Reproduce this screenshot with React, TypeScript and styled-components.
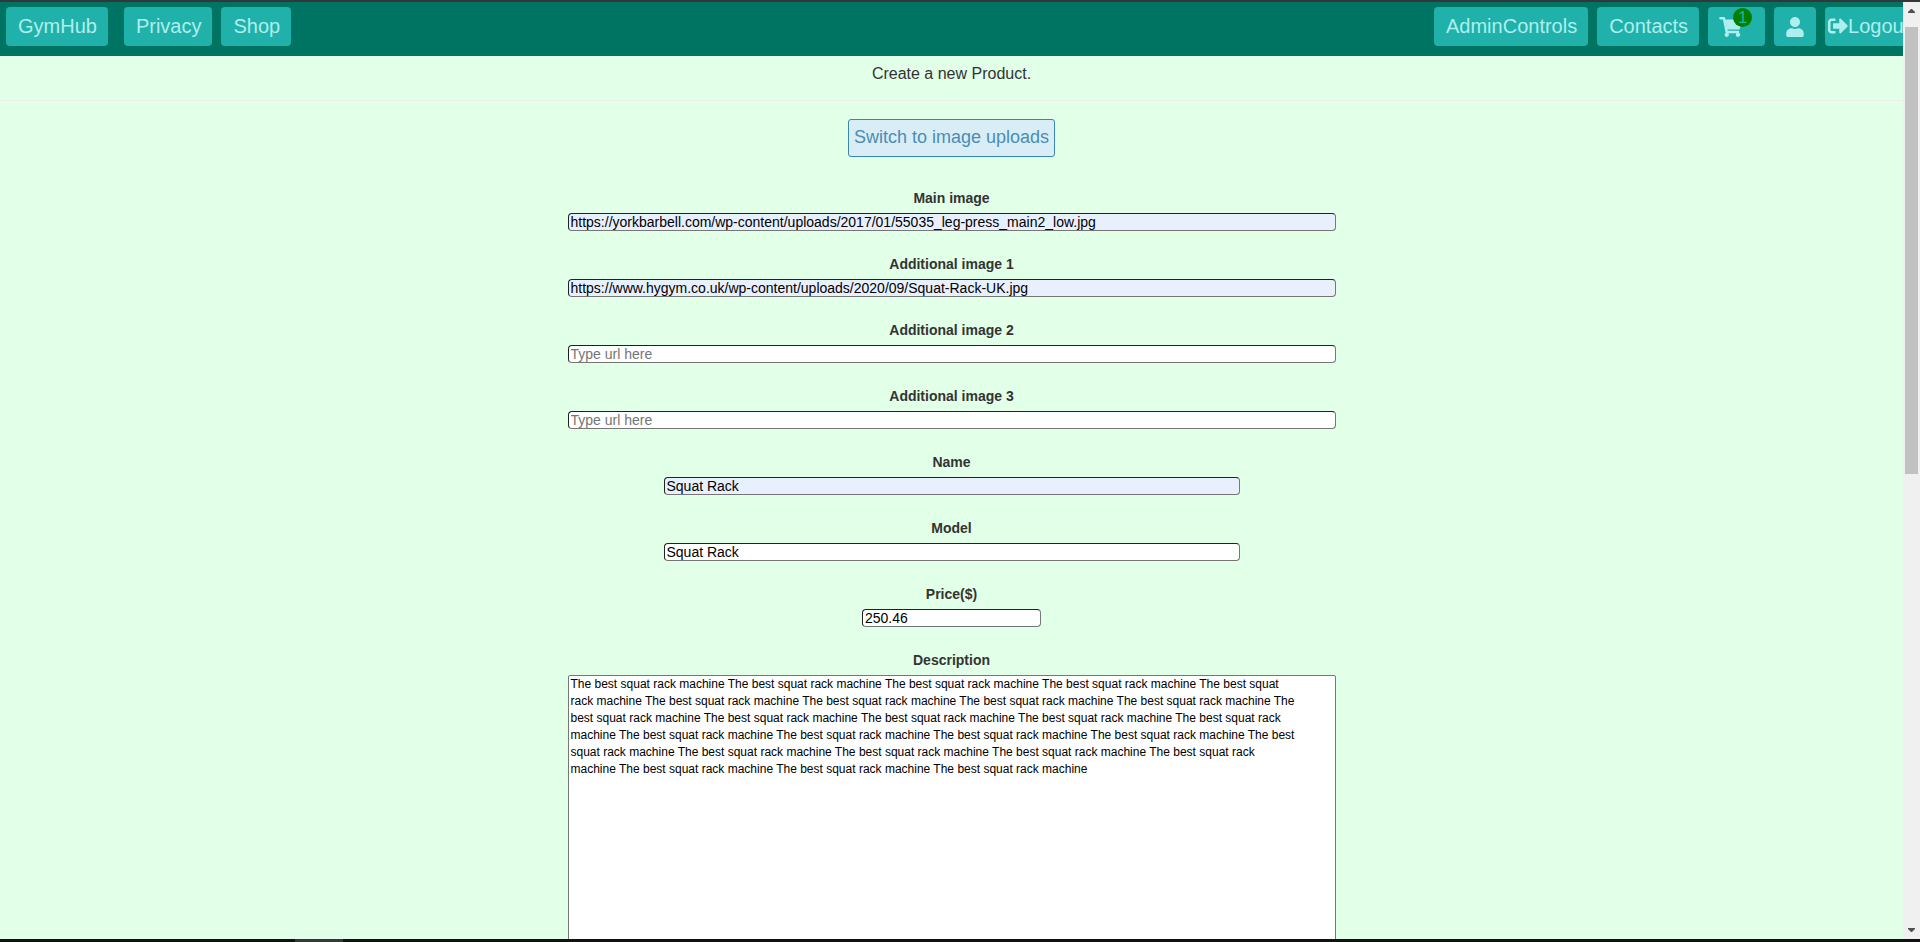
import React from "react";
import styled, { createGlobalStyle } from "styled-components";
import { FaShoppingCart, FaSignOutAlt, FaUser } from "react-icons/fa";

const GlobalStyle = createGlobalStyle`
  *, *::before, *::after { box-sizing: border-box; }
  body {
    margin: 0;
    font-family: "Liberation Sans", Arial, sans-serif;
    font-size: 14px;
    color: #333;
    background: #e2ffe8;
  }
`;

const Window = styled.div`
  display: flex;
  flex-direction: column;
  height: 100vh;
  border-top: 2px solid #35363a;
  overflow: hidden;
`;

const Viewport = styled.div`
  flex: 1;
  min-height: 0;
  display: flex;
`;

const Page = styled.div`
  flex: 1;
  min-width: 0;
  overflow: hidden;
`;

const Navbar = styled.nav`
  display: flex;
  justify-content: space-between;
  height: 54px;
  padding: 5px 0 0 6px;
  background: #007462;
`;

const NavGroup = styled.div<{ $gap: number }>`
  display: flex;
  gap: ${(p) => p.$gap}px;
`;

const RightGroup = styled(NavGroup)`
  width: 469px;
  flex: none;
`;

const NavLink = styled.a<{ $padding?: string }>`
  position: relative;
  flex: none;
  display: flex;
  align-items: center;
  height: 39px;
  padding: ${(p) => p.$padding ?? "0 11px 2px 12px"};
  border-radius: 4px;
  background: #20b2aa;
  color: #afeeee;
  font-size: 20px;
  line-height: 24px;
  text-decoration: none;
  white-space: nowrap;
`;

const CartIcon = styled(FaShoppingCart)`
  width: 23px;
  height: 20px;
`;

const UserIcon = styled(FaUser)`
  width: 18px;
  height: 20px;
`;

const Badge = styled.span`
  position: absolute;
  top: 1px;
  right: 13px;
  width: 19px;
  height: 19px;
  border-radius: 50%;
  background: #008000;
  color: #20b2aa;
  font-size: 16px;
  line-height: 19px;
  text-align: center;
`;

const Title = styled.h1`
  margin: 0;
  padding: 8px 0 17px;
  border-bottom: 1px solid #eee;
  font-size: 16px;
  font-weight: 400;
  line-height: 19px;
  text-align: center;
`;

const Form = styled.form`
  display: flex;
  flex-direction: column;
  align-items: center;
  padding-top: 18px;
`;

const SwitchButton = styled.button`
  height: 38px;
  margin-bottom: 32px;
  padding: 0 5px 2px;
  border: 1px solid #3a87ad;
  border-radius: 3px;
  background: #d9edf7;
  color: #4a8db3;
  font-family: inherit;
  font-size: 18px;
`;

const Field = styled.div`
  display: flex;
  flex-direction: column;
  align-items: center;
  margin-bottom: 24px;
`;

const Label = styled.label`
  height: 24px;
  font-size: 14px;
  font-weight: 700;
  line-height: 18px;
`;

const Input = styled.input<{ $width: string; $filled?: boolean }>`
  width: ${(p) => p.$width};
  height: 18px;
  padding: 1px 2px;
  border: 1px inset #767676;
  border-radius: 4px;
  background: ${(p) => (p.$filled ? "#e8f0fe" : "#fff")};
  color: #000;
  font-family: inherit;
  font-size: 14px;
  line-height: 14px;
  outline: none;
  &::placeholder { color: #757575; }
`;

const TextArea = styled.textarea`
  width: 40vw;
  height: 360px;
  padding: 0 2px;
  border: 1px solid #767676;
  border-radius: 2px;
  background: #fff;
  color: #000;
  font-family: inherit;
  font-size: 12px;
  line-height: 17px;
  resize: none;
  overflow: hidden;
  outline: none;
`;

const Scrollbar = styled.div`
  flex: none;
  display: flex;
  flex-direction: column;
  justify-content: space-between;
  align-items: center;
  width: 17px;
  padding: 7px 0;
  background: #f0f0f0;
`;

const Track = styled.div`
  flex: 1;
  width: 13px;
  margin: 14px 0 8px;
`;

const Thumb = styled.div`
  height: 50%;
  background: #c1c1c1;
`;

const Taskbar = styled.footer`
  display: flex;
  height: 3px;
  padding-left: 295px;
  background: #10120f;
`;

const TaskbarItem = styled.span`
  width: 48px;
  background: #35393a;
`;

const Arrow = ({ down = false }: { down?: boolean }) => (
  <svg width="7" height="4" viewBox="0 0 7 4" fill="#505050" aria-hidden="true">
    <path d={down ? "M0 0h7v1L4 4H3L0 1z" : "M3 0h1l3 3v1H0V3z"} />
  </svg>
);

type FieldSpec = {
  id: string;
  label: string;
  width: string;
  value?: string;
  placeholder?: string;
  filled?: boolean;
};

const fields: FieldSpec[] = [
  { id: "main-image", label: "Main image", width: "40vw", value: "https://yorkbarbell.com/wp-content/uploads/2017/01/55035_leg-press_main2_low.jpg", filled: true },
  { id: "image-1", label: "Additional image 1", width: "40vw", value: "https://www.hygym.co.uk/wp-content/uploads/2020/09/Squat-Rack-UK.jpg", filled: true },
  { id: "image-2", label: "Additional image 2", width: "40vw", placeholder: "Type url here" },
  { id: "image-3", label: "Additional image 3", width: "40vw", placeholder: "Type url here" },
  { id: "name", label: "Name", width: "30vw", value: "Squat Rack", filled: true },
  { id: "model", label: "Model", width: "30vw", value: "Squat Rack" },
  { id: "price", label: "Price($)", width: "179px", value: "250.46" },
];

const phrase = "The best squat rack machine";
const repeat = (n: number) => Array(n).fill(phrase).join(" ");

const description = [
  `${repeat(4)} The best squat`,
  `rack machine ${repeat(4)} The`,
  `best squat rack machine ${repeat(3)} The best squat rack`,
  `machine ${repeat(4)} The best`,
  `squat rack machine ${repeat(3)} The best squat rack`,
  `machine ${repeat(3)}`,
].join("\n");

export default function App() {
  return (
    <Window>
      <GlobalStyle />
      <Viewport>
        <Page>
          <Navbar>
            <NavGroup $gap={16}>
              <NavLink href="#home">GymHub</NavLink>
              <NavGroup $gap={9}>
                <NavLink href="#privacy">Privacy</NavLink>
                <NavLink href="#shop">Shop</NavLink>
              </NavGroup>
            </NavGroup>
            <RightGroup $gap={9}>
              <NavLink href="#admin">AdminControls</NavLink>
              <NavLink href="#contacts">Contacts</NavLink>
              <NavLink href="#cart" aria-label="Cart" $padding="0 23px 0 11px">
                <CartIcon />
                <Badge>1</Badge>
              </NavLink>
              <NavLink href="#account" aria-label="Account" $padding="0 12px">
                <UserIcon />
              </NavLink>
              <NavLink href="#logout" $padding="0 3px 2px">
                <FaSignOutAlt size={20} />
                Logout
              </NavLink>
            </RightGroup>
          </Navbar>
          <main>
            <Title>Create a new Product.</Title>
            <Form>
              <SwitchButton type="button">Switch to image uploads</SwitchButton>
              {fields.map((f) => (
                <Field key={f.id}>
                  <Label htmlFor={f.id}>{f.label}</Label>
                  <Input
                    id={f.id}
                    $width={f.width}
                    $filled={f.filled}
                    defaultValue={f.value}
                    placeholder={f.placeholder}
                    spellCheck={false}
                  />
                </Field>
              ))}
              <Field>
                <Label htmlFor="description">Description</Label>
                <TextArea id="description" defaultValue={description} spellCheck={false} />
              </Field>
            </Form>
          </main>
        </Page>
        <Scrollbar>
          <Arrow />
          <Track><Thumb /></Track>
          <Arrow down />
        </Scrollbar>
      </Viewport>
      <Taskbar><TaskbarItem /></Taskbar>
    </Window>
  );
}
